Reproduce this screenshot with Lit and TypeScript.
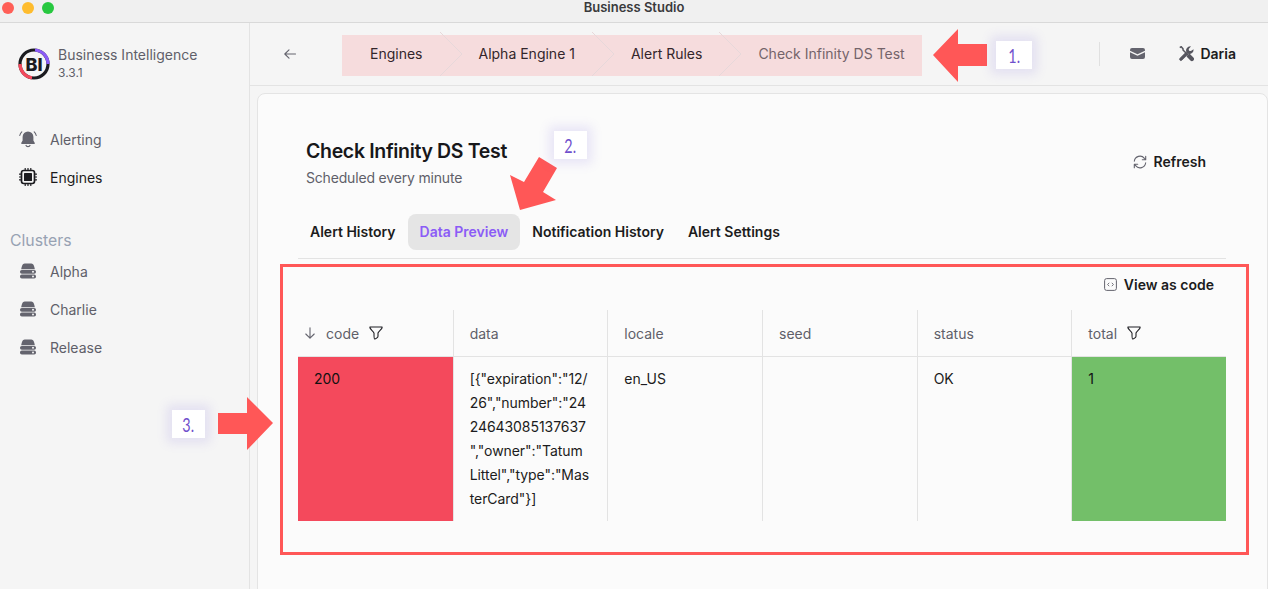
import { LitElement, html, css } from "lit";
import { customElement } from "lit/decorators.js";

const chev = html`<svg class="chev" width="22" height="44" viewBox="0 0 22 44"><path d="M0 0L22 22L0 44" fill="none" stroke="#e7d8da" stroke-width="1"/></svg>`;

const server = html`<svg class="ic" width="18" height="16" viewBox="0 0 18 16"><path d="M2.2 6.3C2.6 3.6 3.6 .6 5.6 .6h6.8c2 0 3 3 3.4 5.7z" fill="#64646e"/><rect x="1" y="6.9" width="16" height="3.9" rx="1.8" fill="#64646e"/><rect x="1" y="11.6" width="16" height="3.9" rx="1.8" fill="#64646e"/><circle cx="14" cy="8.85" r="1" fill="#f5f5f5"/><circle cx="14" cy="13.55" r="1" fill="#f5f5f5"/></svg>`;

const filter = html`<svg class="filter" width="14" height="14" viewBox="0 0 14 14"><path d="M.8 1h12.4c.3 2-3.6 4-4.2 6v3.2c0 1.200-2.600 3-3.400 2.800-.6-.2-.6-1.500-.6-5.800C4.400 5 .5 3 .8 1z" fill="none" stroke="#1f1f24" stroke-width="1.100" stroke-linejoin="round"/></svg>`;

@customElement("app-root")
export class AppRoot extends LitElement {
  static styles = css`
    :host {
      display: block;
      position: relative;
      width: 1268px;
      height: 589px;
      overflow: hidden;
      background: #f5f5f5;
      font-family: Inter, "Liberation Sans", sans-serif;
      font-size: 14px;
      color: #1c1c20;
    }
    * { box-sizing: border-box; }
    .titlebar {
      height: 23px;
      background: #f0f0f0;
      border-bottom: 1px solid #d9d9d9;
      display: flex;
      align-items: center;
      justify-content: center;
      position: relative;
      font-size: 13px;
      font-weight: 600;
      color: #3a3a3c;
      padding-bottom: 8px;
    }
    .lights { position: absolute; left: 2px; top: 2px; display: flex; gap: 8px; }
    .lights i { display: block; width: 12px; height: 12px; border-radius: 50%; }
    .red { background: #ff5f57; }
    .yel { background: #febc2e; }
    .grn { background: #28c840; }
    .body { display: flex; height: 566px; }
    .side {
      width: 250px;
      flex: none;
      border-right: 1px solid #e3e3e3;
      padding-top: 25px;
    }
    .brand { display: flex; gap: 8px; padding-left: 18px; height: 32px; align-items: center; }
    .brand-name { font-size: 14px; line-height: 18px; color: #5f5f69; }
    .brand-ver { font-size: 12px; line-height: 18px; color: #5f5f69; }
    .nav { margin-top: 40px; display: flex; flex-direction: column; }
    .item {
      height: 38px;
      display: flex;
      align-items: center;
      padding-left: 19px;
      color: #5f5f69;
    }
    .item .ic { flex: none; }
    .item span { margin-left: 13px; }
    .item.on { color: #1c1c20; }
    .clusters { margin: 35px 0 0 10px; font-size: 15.800px; line-height: 20px; color: #98a2b3; }
    .clusters + .nav { margin-top: 1px; }
    .main { flex: 1; min-width: 0; display: flex; flex-direction: column; }
    .head {
      height: 63px;
      flex: none;
      border-bottom: 1px solid #e3e3e3;
      display: flex;
      align-items: center;
      padding: 0 32px 1px 34px;
    }
    .crumbs {
      margin-left: 46px;
      margin-top: 4px;
      height: 41px;
      padding: 0 17px 5px 28px;
      background: #f6dcdd;
      display: flex;
      align-items: center;
      gap: 17px;
      color: #33262b;
    }
    .crumbs .chev { flex: none; overflow: visible; margin-top: 2px; }
    .crumbs .last { color: #74646a; }
    .head-right { margin-left: auto; display: flex; align-items: center; font-weight: 600; }
    .vsep { width: 1px; height: 24px; background: #e0e0e0; margin-right: 30px; }
    .user { display: flex; align-items: center; gap: 6px; margin-left: 33px; }
    .wrap { flex: 1; min-height: 0; padding: 7px 0 0 7px; }
    .card {
      height: 600px;
      background: #fbfbfb;
      border: 1px solid #e4e4e4;
      border-radius: 8px;
      padding: 44px 41px 0 40px;
    }
    .card-head { display: flex; justify-content: space-between; align-items: center; padding: 0 20px 0 8px; }
    h1 { margin: 0; font-size: 19.500px; line-height: 26px; font-weight: 600; letter-spacing: -.33px; color: #17171a; }
    .sub { margin-top: 4px; line-height: 20px; color: #5f5f69; letter-spacing: -.18px; }
    .btn { display: flex; align-items: center; gap: 7px; font-weight: 600; color: #1c1c20; }
    .btn.refresh { margin-bottom: 3px; }
    .tabs { display: flex; margin-top: 26px; padding-bottom: 8px; border-bottom: 1px solid #e3e3e3; font-weight: 600; }
    .tab { height: 36px; padding: 0 12px 1px; display: flex; align-items: center; border-radius: 8px; }
    .tab.on { background: #e5e5e5; color: #8b5cf6; }
    .toolbar { height: 51px; display: flex; align-items: center; justify-content: flex-end; padding-right: 12px; }
    .grid { display: grid; grid-template-columns: repeat(6, 1fr); }
    .th {
      height: 47px;
      display: flex;
      align-items: center;
      gap: 10px;
      padding: 0 16px;
      color: #5f5f69;
      border-bottom: 1px solid #e3e3e3;
      border-left: 1px solid #e3e3e3;
    }
    .th:first-child { border-left: none; }
    .th.sorted { padding-left: 6px; }
    .td {
      height: 164px;
      padding: 10px 16px;
      line-height: 24px;
      border-left: 1px solid #e3e3e3;
      color: #1c1c20;
    }
    .td.code { background: #f4495c; color: #111; border-left: none; }
    .td.total { background: #73bf69; color: #111; }
    .td.data { word-break: break-word; overflow-wrap: anywhere; letter-spacing: -.06px; }
    .frame {
      position: absolute;
      left: 280px;
      top: 264px;
      width: 969px;
      height: 291px;
      border: 3px solid #ff5757;
      pointer-events: none;
    }
    .arrows { position: absolute; left: 0; top: 0; pointer-events: none; }
    .note {
      position: absolute;
      height: 28px;
      background: #fff;
      box-shadow: 0 0 10px 5px rgba(120, 100, 220, .14);
      display: flex;
      align-items: center;
      justify-content: center;
      font-family: Lato, sans-serif;
      font-weight: 400;
      font-size: 20px;
      color: #6f50cc;
    }
    .note span { display: inline-block; transform: scaleX(.72); }
    .n1 { left: 996px; top: 41px; width: 36px; }
    .n2 { left: 554px; top: 131px; width: 33px; }
    .n3 { left: 172px; top: 410px; width: 33px; }
  `;

  render() {
    return html`
      <div class="titlebar">
        <div class="lights"><i class="red"></i><i class="yel"></i><i class="grn"></i></div>
        Business Studio
      </div>
      <div class="body">
        <aside class="side">
          <div class="brand">
            <svg width="32" height="32" viewBox="0 0 32 32">
              <circle cx="16" cy="16" r="14" fill="none" stroke="#1b1b1f" stroke-width="3.200"/>
              <path d="M17 2A14 14 0 0 1 30 16" fill="none" stroke="#8b5cf6" stroke-width="3.200"/>
              <path d="M2 16A14 14 0 0 0 14 29.900" fill="none" stroke="#f4495c" stroke-width="3.200"/>
              <text x="16" y="22.500" text-anchor="middle" font-family="Inter, sans-serif" font-size="18" font-weight="800" fill="#1b1b1f">BI</text>
            </svg>
            <div>
              <div class="brand-name">Business Intelligence</div>
              <div class="brand-ver">3.3.1</div>
            </div>
          </div>
          <div class="nav">
            <div class="item">
              <svg class="ic" width="18" height="18" viewBox="0 0 18 18">
                <path d="M9 1.500a5.400 5.400 0 0 0-5.400 5.400v3.500L2.200 13c-.2.500.1.900.5.900h12.600c.4 0 .7-.4.500-.9L14.400 10.400V6.900A5.400 5.400 0 0 0 9 1.500z" fill="#64646e"/>
                <path d="M6.800 15a2.300 2.300 0 0 0 4.400 0" fill="none" stroke="#64646e" stroke-width="1.100"/>
                <path d="M.8 5.500C1.100 4 1.800 2.800 2.800 1.800M17.200 5.500C16.900 4 16.200 2.800 15.200 1.800" fill="none" stroke="#64646e" stroke-width="1.100" stroke-linecap="round"/>
              </svg>
              <span>Alerting</span>
            </div>
            <div class="item on">
              <svg class="ic" width="18" height="18" viewBox="0 0 18 18">
                <rect x="2.500" y="2.500" width="13" height="13" rx="2.200" fill="none" stroke="#1c1c20" stroke-width="1.700"/>
                <rect x="5" y="5" width="8" height="8" rx=".6" fill="#1c1c20"/>
                <path d="M6.200.4v2M9 .4v2M11.800.4v2M6.200 15.600v2M9 15.600v2M11.800 15.600v2M.4 6.200h2M.4 9h2M.4 11.800h2M15.600 6.200h2M15.600 9h2M15.600 11.800h2" stroke="#1c1c20" stroke-width="1.200" stroke-linecap="round"/>
              </svg>
              <span>Engines</span>
            </div>
          </div>
          <div class="clusters">Clusters</div>
          <div class="nav">
            <div class="item">${server}<span>Alpha</span></div>
            <div class="item">${server}<span>Charlie</span></div>
            <div class="item">${server}<span>Release</span></div>
          </div>
        </aside>
        <main class="main">
          <header class="head">
            <svg width="12" height="10" viewBox="0 0 12 10"><path d="M11.500 5H.8M5 .8L.8 5L5 9.200" fill="none" stroke="#64646e" stroke-width="1.100" stroke-linecap="round" stroke-linejoin="round"/></svg>
            <nav class="crumbs">
              <span>Engines</span>${chev}
              <span>Alpha Engine 1</span>${chev}
              <span>Alert Rules</span>${chev}
              <span class="last">Check Infinity DS Test</span>
            </nav>
            <div class="head-right">
              <div class="vsep"></div>
              <svg width="15" height="11" viewBox="0 0 15 11"><path d="M0 2a2 2 0 0 1 2-2h11a2 2 0 0 1 2 2v.8L7.500 6.300 0 2.800zM0 4.300l7.500 3.500L15 4.300V9a2 2 0 0 1-2 2H2a2 2 0 0 1-2-2z" fill="#64646e"/></svg>
              <div class="user">
                <svg width="16" height="16" viewBox="0 0 16 16">
                  <path d="M1.800 1.700l1.400-1 1.800 2v1.300L11 10" fill="none" stroke="#55555e" stroke-width="1.500"/>
                  <path d="M10 9l1.500-1.500 3.900 3.900a2 2 0 0 1-3 3L8.500 10.500z" fill="#55555e"/>
                  <path d="M2 12.200l6-6 2 2-6.200 6a1.300 1.300 0 0 1-1.800-2z" fill="#55555e" stroke="#55555e" stroke-width=".7"/>
                  <path d="M15.500 3.200a4.200 4.200 0 0 1-5.500 4.600L8.400 6.200A4.200 4.200 0 0 1 12.900.4L10.700 2.900l.3 1.900 1.900.3z" fill="#55555e"/>
                </svg>
                Daria
              </div>
            </div>
          </header>
          <div class="wrap">
            <section class="card">
              <div class="card-head">
                <div>
                  <h1>Check Infinity DS Test</h1>
                  <div class="sub">Scheduled every minute</div>
                </div>
                <div class="btn refresh">
                  <svg width="14" height="14" viewBox="0 0 14 14"><path d="M1.300 6.200A5.700 5.700 0 0 1 11.400 3.300L12.700 4.700M12.700 1.300v3.400H9.300M12.700 7.800A5.700 5.700 0 0 1 2.600 10.700L1.300 9.300M1.300 12.700V9.300h3.400" fill="none" stroke="#64646e" stroke-width="1.100" stroke-linecap="round" stroke-linejoin="round"/></svg>
                  Refresh
                </div>
              </div>
              <div class="tabs">
                <div class="tab">Alert History</div>
                <div class="tab on">Data Preview</div>
                <div class="tab">Notification History</div>
                <div class="tab">Alert Settings</div>
              </div>
              <div class="toolbar">
                <div class="btn">
                  <svg width="13" height="13" viewBox="0 0 13 13"><rect x=".6" y=".6" width="11.800" height="11.800" rx="2" fill="none" stroke="#64646e" stroke-width="1"/><path d="M5.200 4.800L3.600 6.500l1.600 1.700M7.800 4.800l1.600 1.700-1.600 1.700" fill="none" stroke="#64646e" stroke-width=".9"/></svg>
                  View as code
                </div>
              </div>
              <div class="grid">
                <div class="th sorted">
                  <svg width="12" height="12" viewBox="0 0 12 12"><path d="M6 .8v10.400M1.800 7L6 11.200 10.200 7" fill="none" stroke="#64646e" stroke-width="1.100" stroke-linecap="round" stroke-linejoin="round"/></svg>
                  code ${filter}
                </div>
                <div class="th">data</div>
                <div class="th">locale</div>
                <div class="th">seed</div>
                <div class="th">status</div>
                <div class="th">total ${filter}</div>
                <div class="td code">200</div>
                <div class="td data">[{"expiration":"12/26","number":"2424643085137637","owner":"Tatum Littel","type":"MasterCard"}]</div>
                <div class="td">en_US</div>
                <div class="td"></div>
                <div class="td">OK</div>
                <div class="td total">1</div>
              </div>
            </section>
          </div>
        </main>
      </div>
      <div class="frame"></div>
      <svg class="arrows" width="1268" height="589" viewBox="0 0 1268 589">
        <polygon points="933,55 958,29 958,44 987,44 987,66 958,66 958,82" fill="#ff5757"/>
        <polygon points="520,210 510,175 524,182 539,157 557,168 543,192 556,200" fill="#ff5757"/>
        <polygon points="273,423 247,397 247,413 218,413 218,434 247,434 247,450" fill="#ff5757"/>
      </svg>
      <div class="note n1"><span>1.</span></div>
      <div class="note n2"><span>2.</span></div>
      <div class="note n3"><span>3.</span></div>
    `;
  }
}
